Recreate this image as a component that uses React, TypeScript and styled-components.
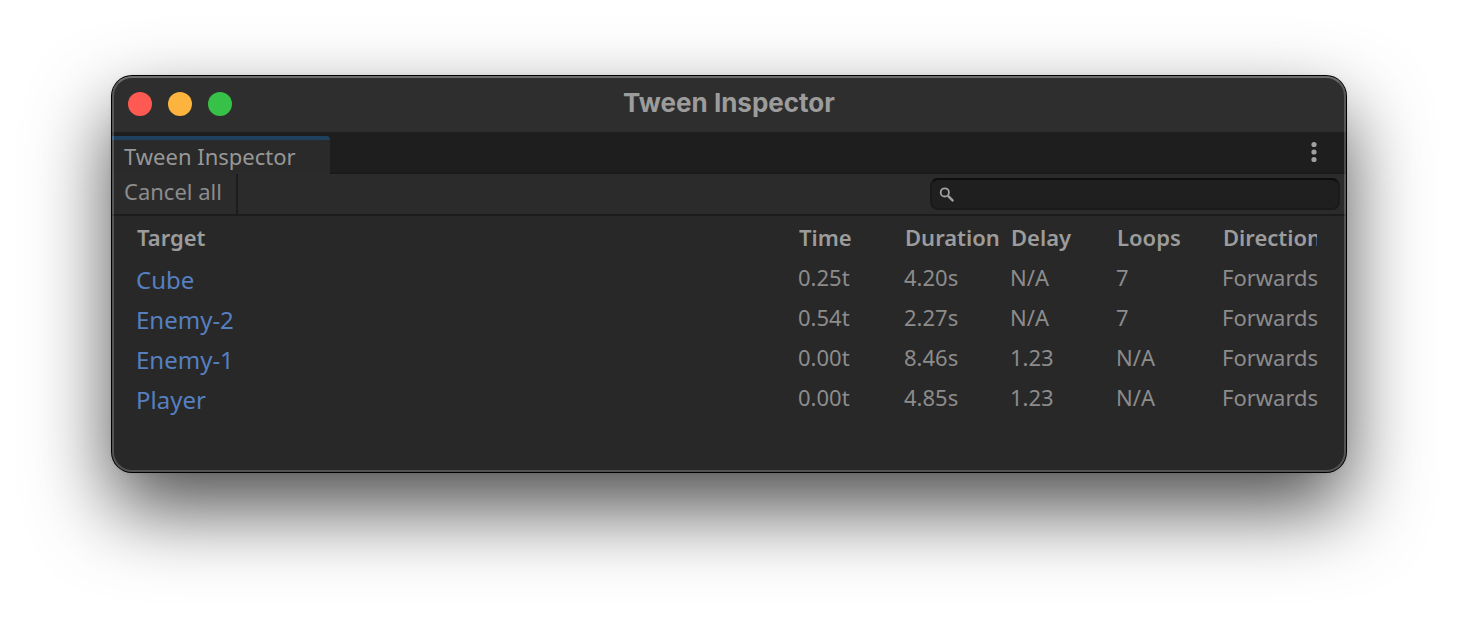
import React from 'react';
import styled, { createGlobalStyle } from 'styled-components';

const GlobalStyle = createGlobalStyle`
  *, *::before, *::after { box-sizing: border-box; }
  body {
    margin: 0;
    background: #ffffff;
    font-family: "Noto Sans", "Open Sans", sans-serif;
    overflow-x: hidden;
  }
`;

const Desktop = styled.main`
  padding: 76px 112px 148px;
`;

const Window = styled.section`
  position: relative;
  border-radius: 20px;
  background: #282828;
  box-shadow: 0 0 0 1px #000000, 0 0 4px rgba(0, 0, 0, 0.12), 0 36px 80px rgba(0, 0, 0, 0.7);

  /* light rim drawn over the window's contents */
  &::after {
    content: '';
    position: absolute;
    inset: 0;
    border: 2px solid rgba(255, 255, 255, 0.2);
    border-top-color: rgba(255, 255, 255, 0.3);
    border-radius: inherit;
    pointer-events: none;
  }
`;

const TitleBar = styled.header`
  display: grid;
  grid-template-columns: 1fr auto 1fr;
  align-items: center;
  height: 56px;
  padding: 0 16px;
  border-radius: 20px 20px 0 0;
  background: #2e2e2e;
`;

const Lights = styled.div`
  display: flex;
  gap: 16px;
`;

const Light = styled.button<{ $color: string }>`
  width: 24px;
  height: 24px;
  padding: 0;
  border: 0;
  border-radius: 50%;
  background: ${(p) => p.$color};
`;

const Title = styled.h1`
  margin: 0;
  padding-bottom: 2px;
  color: #9c9c9c;
  font: 700 26px/52px Inter, sans-serif;
`;

const TabBar = styled.div`
  display: flex;
  justify-content: space-between;
  height: 42px;
  padding-top: 4px;
  background: #1e1e1e;
  box-shadow: inset 0 -2px #1a1a1a;
`;

const Tab = styled.button`
  height: 38px;
  padding: 0 34px 2px 12px;
  border: 0;
  border-top: 4px solid #20405f;
  border-radius: 0 4px 0 0;
  background: #2a2a2a;
  color: #979797;
  font: 400 22px/32px "Noto Sans", "Open Sans", sans-serif;
`;

const MenuButton = styled.button`
  display: flex;
  width: 24px;
  height: 24px;
  margin: 4px 20px 0 0;
  padding: 0;
  border: 0;
  background: none;
`;

const Toolbar = styled.div`
  display: flex;
  justify-content: space-between;
  height: 42px;
  border-bottom: 2px solid #1c1c1c;
  background: #2b2b2b;
`;

const ToolButton = styled.button`
  padding: 0 14px 6px 12px;
  border: 0;
  border-right: 2px solid #1c1c1c;
  background: none;
  color: #8c8c8c;
  font: 400 22px/32px "Noto Sans", "Open Sans", sans-serif;
`;

const SearchBox = styled.label`
  display: flex;
  align-items: center;
  width: 410px;
  height: 32px;
  margin: 4px 6px 0 0;
  padding: 0 8px 0 6px;
  border: 2px solid #1a1a1a;
  border-top-color: #0d0d0d;
  border-radius: 8px;
  background: #1f1f1f;
`;

const SearchInput = styled.input`
  flex: 1;
  min-width: 0;
  padding: 0 4px;
  border: 0;
  outline: 0;
  background: none;
  color: #979797;
  font: 400 20px/24px "Noto Sans", "Open Sans", sans-serif;
`;

const TableArea = styled.div`
  padding: 2px 18px 52px 24px;
`;

const Table = styled.table`
  width: 100%;
  table-layout: fixed;
  border-collapse: collapse;
`;

const Column = styled.col<{ $fixed?: boolean }>`
  width: ${(p) => (p.$fixed ? '106px' : 'auto')};
`;

const Heading = styled.th`
  height: 42px;
  padding: 0 11px 4px 1px;
  color: #9c9c9c;
  font-size: 22px;
  font-weight: 600;
  line-height: 38px;
  text-align: left;
`;

const Clip = styled.span`
  display: block;
  overflow: hidden;
  white-space: nowrap;
`;

const Cell = styled.td`
  height: 40px;
  padding: 0 0 6px;
  color: #8c8c8c;
  font-size: 22px;
  line-height: 34px;
  white-space: nowrap;
`;

const NameCell = styled(Cell)`
  padding: 0;
  font-size: 24px;
  line-height: 40px;
`;

const TargetLink = styled.a`
  color: #567fc0;
  text-decoration: none;
`;

const headings = ['Target', 'Time', 'Duration', 'Delay', 'Loops', 'Direction'];

const tweens = [
  { target: 'Cube', values: ['0.25t', '4.20s', 'N/A', '7', 'Forwards'] },
  { target: 'Enemy-2', values: ['0.54t', '2.27s', 'N/A', '7', 'Forwards'] },
  { target: 'Enemy-1', values: ['0.00t', '8.46s', '1.23', 'N/A', 'Forwards'] },
  { target: 'Player', values: ['0.00t', '4.85s', '1.23', 'N/A', 'Forwards'] },
];

export default function App() {
  return (
    <>
      <GlobalStyle />
      <Desktop>
        <Window>
          <TitleBar>
            <Lights>
              <Light $color="#ff5a52" aria-label="Close" />
              <Light $color="#fdb43f" aria-label="Minimize" />
              <Light $color="#38c149" aria-label="Zoom" />
            </Lights>
            <Title>Tween Inspector</Title>
          </TitleBar>
          <TabBar>
            <Tab>Tween Inspector</Tab>
            <MenuButton aria-label="Menu">
              <svg width="24" height="24" viewBox="0 0 24 24" fill="#a0a0a0">
                <circle cx="12" cy="4.5" r="2.6" />
                <circle cx="12" cy="12" r="2.6" />
                <circle cx="12" cy="19.5" r="2.6" />
              </svg>
            </MenuButton>
          </TabBar>
          <Toolbar>
            <ToolButton>Cancel all</ToolButton>
            <SearchBox>
              <svg width="18" height="18" viewBox="0 0 18 18" fill="none" stroke="#a0a0a0">
                <circle cx="6.8" cy="7.4" r="4.1" strokeWidth="1.8" />
                <path d="M10 10.8 L15.3 16.2" strokeWidth="2.4" />
              </svg>
              <SearchInput type="text" aria-label="Search" />
            </SearchBox>
          </Toolbar>
          <TableArea>
            <Table>
              <colgroup>
                <Column />
                <Column $fixed />
                <Column $fixed />
                <Column $fixed />
                <Column $fixed />
                <Column $fixed />
              </colgroup>
              <thead>
                <tr>
                  {headings.map((h) => (
                    <Heading key={h} scope="col">
                      <Clip>{h}</Clip>
                    </Heading>
                  ))}
                </tr>
              </thead>
              <tbody>
                {tweens.map((t) => (
                  <tr key={t.target}>
                    <NameCell>
                      <TargetLink href="#">{t.target}</TargetLink>
                    </NameCell>
                    {t.values.map((v, i) => (
                      <Cell key={i}>{v}</Cell>
                    ))}
                  </tr>
                ))}
              </tbody>
            </Table>
          </TableArea>
        </Window>
      </Desktop>
    </>
  );
}
